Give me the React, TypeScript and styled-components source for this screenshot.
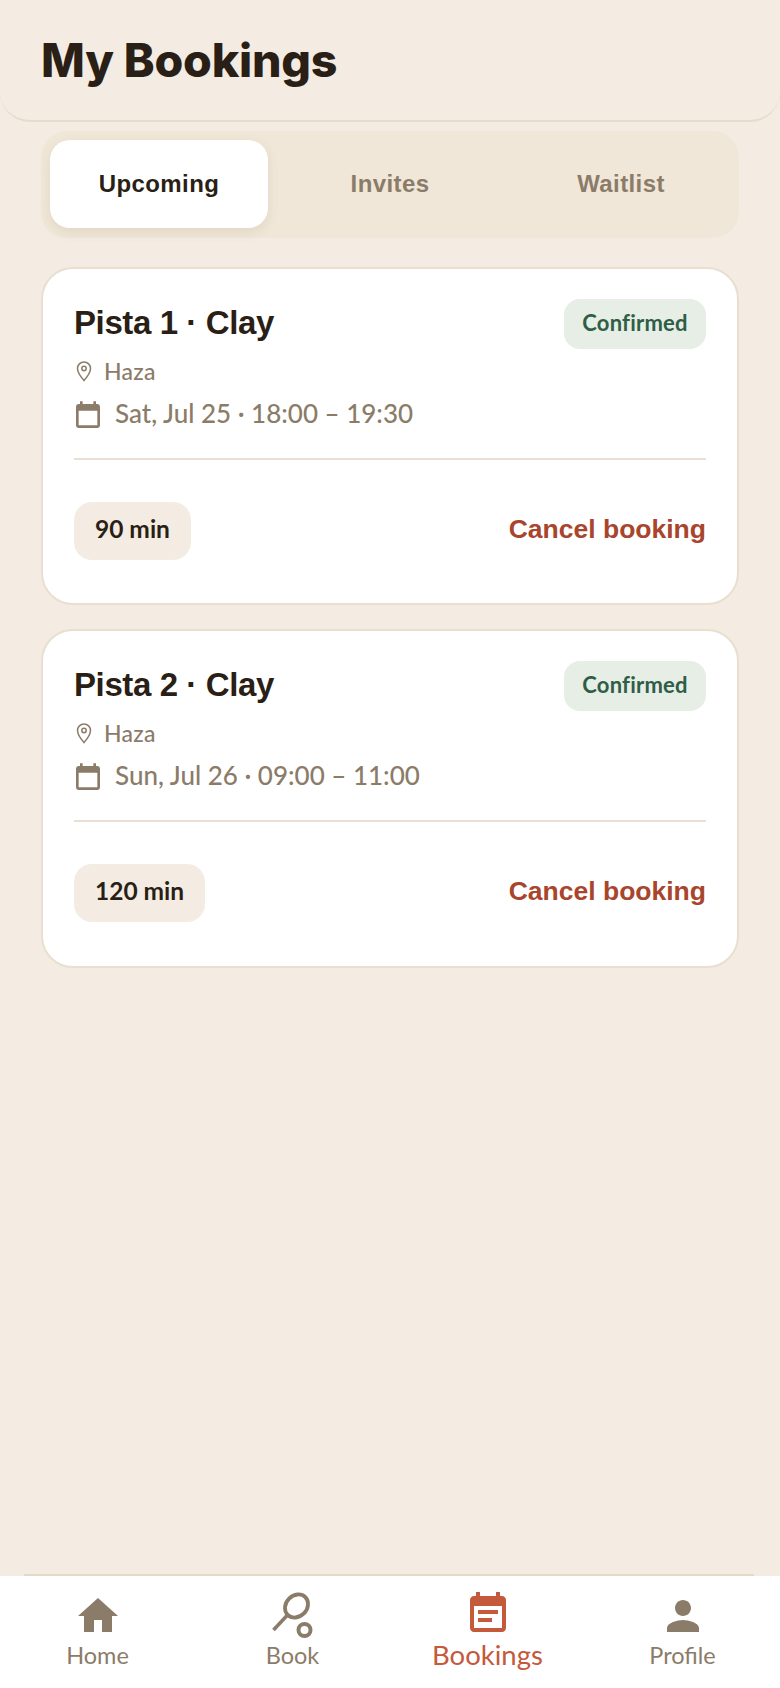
import React from 'react';
import styled, { createGlobalStyle } from 'styled-components';

const Global = createGlobalStyle`
  html, body { margin: 0; padding: 0; background: #f4ece3; }
  * { box-sizing: border-box; }
`;
const Page = styled.div`
  width: 780px; height: 1688px; display: flex; flex-direction: column; background: #f4ece3;
  font-family: "Lato", "Liberation Sans", sans-serif; overflow: hidden;
`;
const Header = styled.header`
  height: 122px; flex: none; padding: 34px 41px 0; border-bottom: 2px solid #e6dccd; border-radius: 0 0 30px 30px;
`;
const Title = styled.h1`
  margin: 0; font: 800 46.5px/52px "Inter", sans-serif; letter-spacing: -0.2px; color: #2a1f16;
`;
const Main = styled.main`
  flex: 1; display: flex; flex-direction: column; padding: 9px 41px 0;
`;
const Tabs = styled.div`
  height: 107px; padding: 9px 9px 10px; display: grid; grid-template-columns: repeat(3, 1fr); gap: 13px; background: #f0e7d8; border-radius: 26px; margin-bottom: 29px;
`;
const Tab = styled.div<{ $active?: boolean }>`
  display: flex; align-items: center; justify-content: center; border-radius: 20px;
  font: 700 24px "Liberation Sans", sans-serif; letter-spacing: 0.4px;
  color: ${p => (p.$active ? '#2a1f16' : '#8b7c69')};
  background: ${p => (p.$active ? '#fff' : 'transparent')};
  box-shadow: ${p => (p.$active ? '0 4px 12px rgba(120,95,60,0.12)' : 'none')};
`;
const Card = styled.article`
  height: 338px; margin-bottom: 24px; padding: 30px 31px 0; background: #fff; border: 2px solid #e8dfcf; border-radius: 32px;
  &:last-child { height: 339px; }
`;
const CardTop = styled.div`
  display: flex; justify-content: space-between; align-items: flex-start; height: 50px;
`;
const CardTitle = styled.h2`
  margin: 1px 0 0; font: 700 33px/46px "Liberation Sans", sans-serif; letter-spacing: -0.4px; color: #2a1f16;
`;
const Badge = styled.span`
  height: 50px; width: 142px; padding-bottom: 4px; display: flex; align-items: center; justify-content: center; border-radius: 16px;
  background: #e6eee6; color: #2f5d46; font-size: 22px; font-weight: 700; letter-spacing: 0.2px;
`;
const Place = styled.div`
  display: flex; align-items: center; gap: 10px; margin-top: 5px; height: 34px; color: #8b7c69; font-size: 23px; font-weight: 500; letter-spacing: 0.3px;
`;
const When = styled.div`
  display: flex; align-items: center; gap: 11px; height: 36px; margin-top: 7px; color: #8b7c69; font-size: 26px; font-weight: 500;
  svg { margin: 6px 0 0 -2px; flex: none; }
`;
const Divider = styled.hr`
  margin: 27px 0 0; border: 0; height: 2px; background: #eadfd2;
`;
const CardBottom = styled.div`
  display: flex; justify-content: space-between; align-items: center; margin-top: 42px;
`;
const Chip = styled.span`
  height: 58px; padding: 0 21px 5px; display: flex; align-items: center; border-radius: 18px; background: #f4ece3; color: #2a1f16; font-size: 24.5px; font-weight: 700;
`;
const CancelLink = styled.a`
  margin-bottom: 4px; font: 700 26.5px "Liberation Sans", sans-serif; color: #a8452c;
`;
const Nav = styled.nav`
  position: relative; height: 112px; flex: none; display: grid; grid-template-columns: repeat(4, 1fr); background: #fff;
  &::before { content: ""; position: absolute; top: -2px; left: 24px; right: 26px; height: 2px; background: #e3d9c8; }
`;
const NavItem = styled.div<{ $active?: boolean }>`
  display: flex; flex-direction: column; align-items: center; padding-top: 16px; color: ${p => (p.$active ? '#c4593b' : '#8b7c69')};
  font-size: ${p => (p.$active ? '27.5px' : '23.5px')}; line-height: 30px;
  svg { display: block; flex: none; }
`;

const Pin = () => (
  <svg width="20" height="22" viewBox="0 0 20 22" fill="none" stroke="currentColor" strokeWidth="1.5">
    <path d="M10 20.5C6 16 3.500 12.500 3.500 8.500a6.500 6.500 0 0 1 13 0c0 4-2.500 7.500-6.500 12z" />
    <circle cx="10" cy="8.500" r="2.200" />
  </svg>
);
const Calendar = () => (
  <svg width="32" height="32" viewBox="0 0 24 24" fill="currentColor">
    <path d="M19 3h-1V1h-2v2H8V1H6v2H5c-1.110 0-1.990.9-1.990 2L3 19c0 1.100.89 2 2 2h14c1.100 0 2-.9 2-2V5c0-1.100-.9-2-2-2zm0 16H5V8h14v11z" />
  </svg>
);
const HomeIcon = () => (
  <svg width="48" height="48" viewBox="0 0 24 24" fill="currentColor"><path d="M10 20v-6h4v6h5v-8h3L12 3 2 12h3v8z" /></svg>
);
const RacketIcon = () => (
  <svg width="48" height="48" viewBox="0 0 48 48" fill="none" stroke="currentColor">
    <ellipse cx="27.500" cy="14" rx="12.500" ry="10.500" strokeWidth="3.800" transform="rotate(-45 27.500 14)" />
    <path d="M4.500 38 L18.500 23" strokeWidth="3.600" />
    <circle cx="35.500" cy="38" r="6" strokeWidth="4" />
  </svg>
);
const BookingsIcon = () => (
  <svg width="48" height="48" viewBox="0 1 24 24" fill="currentColor">
    <path d="M17 10H7v2h10v-2zm2-7h-1V1h-2v2H8V1H6v2H5c-1.110 0-1.990.9-1.990 2L3 19c0 1.100.89 2 2 2h14c1.100 0 2-.9 2-2V5c0-1.100-.9-2-2-2zm0 16H5V8h14v11zm-5-5H7v2h7v-2z" />
  </svg>
);
const PersonIcon = () => (
  <svg width="48" height="48" viewBox="0 0 24 24" fill="currentColor"><path d="M12 12c2.210 0 4-1.790 4-4s-1.790-4-4-4-4 1.790-4 4 1.790 4 4 4zm0 2c-2.670 0-8 1.340-8 4v2h16v-2c0-2.660-5.330-4-8-4z" /></svg>
);

const bookings = [
  { title: 'Pista 1 · Clay', when: 'Sat, Jul 25 · 18:00 – 19:30', mins: '90 min' },
  { title: 'Pista 2 · Clay', when: 'Sun, Jul 26 · 09:00 – 11:00', mins: '120 min' },
];

export default function App() {
  return (
    <Page>
      <Global />
      <Header><Title>My Bookings</Title></Header>
      <Main>
        <Tabs>
          <Tab $active>Upcoming</Tab>
          <Tab>Invites</Tab>
          <Tab>Waitlist</Tab>
        </Tabs>
        {bookings.map(b => (
          <Card key={b.title}>
            <CardTop>
              <CardTitle>{b.title}</CardTitle>
              <Badge>Confirmed</Badge>
            </CardTop>
            <Place><Pin />Haza</Place>
            <When><Calendar />{b.when}</When>
            <Divider />
            <CardBottom>
              <Chip>{b.mins}</Chip>
              <CancelLink>Cancel booking</CancelLink>
            </CardBottom>
          </Card>
        ))}
      </Main>
      <Nav>
        <NavItem><HomeIcon />Home</NavItem>
        <NavItem><RacketIcon />Book</NavItem>
        <NavItem $active><BookingsIcon />Bookings</NavItem>
        <NavItem><PersonIcon />Profile</NavItem>
      </Nav>
    </Page>
  );
}
